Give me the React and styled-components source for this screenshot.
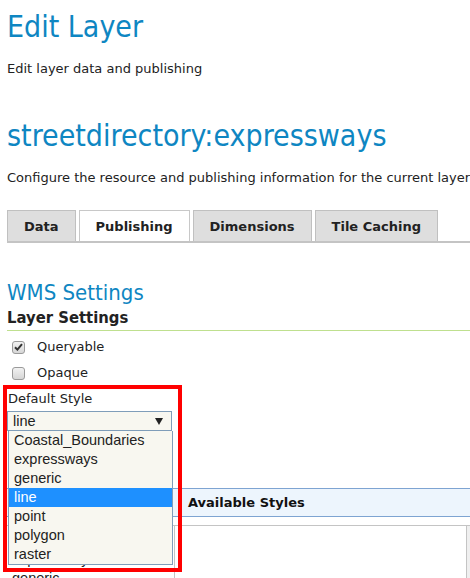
import React from 'react';
import styled, { createGlobalStyle } from 'styled-components';

const Global = createGlobalStyle`
  html, body {
    margin: 0;
    padding: 0;
    background: #fff;
    overflow: hidden;
  }
  body {
    font-family: "DejaVu Sans", Verdana, sans-serif;
    font-size: 13px;
    color: #222;
  }
  * { box-sizing: border-box; }
`;

const Page = styled.div`
  position: relative;
  width: 470px;
  height: 578px;
  padding-left: 7px;
  overflow: hidden;
  white-space: nowrap;
`;

const Title = styled.h1`
  margin: ${p => p.$top}px 0 0;
  font-family: "DejaVu Sans Condensed", "DejaVu Sans", sans-serif;
  font-stretch: condensed;
  font-weight: normal;
  font-size: 30px;
  line-height: 36px;
  color: #0e86c2;
`;

const Lead = styled.p`
  margin: 16px 0 0;
  font-size: 13px;
  line-height: 16px;
  color: #222;
`;

const TabBar = styled.div`
  display: flex;
  gap: 3px;
  margin-top: 24px;
  border-bottom: 2px solid #c4c4c4;
`;

const Tab = styled.div`
  height: 31px;
  padding: 1px 16px 0;
  border: 1px solid ${p => (p.$active ? '#c8c8c8' : '#c0c0c0')};
  border-bottom: none;
  background: ${p => (p.$active ? '#fff' : '#dedede')};
  font-weight: bold;
  font-size: 13px;
  line-height: 29px;
  color: #222;
`;

const SectionTitle = styled.h2`
  margin: 37px 0 0;
  font-family: "DejaVu Sans Condensed", "DejaVu Sans", sans-serif;
  font-stretch: condensed;
  font-weight: normal;
  font-size: 22px;
  line-height: 26px;
  color: #0e86c2;
`;

const SubTitle = styled.h3`
  margin: 2px 0 0;
  padding-bottom: 2px;
  font-family: "DejaVu Sans Condensed", "DejaVu Sans", sans-serif;
  font-stretch: condensed;
  font-weight: bold;
  font-size: 16.5px;
  line-height: 20px;
  color: #222;
  border-bottom: 1px solid #bfe08f;
`;

const CheckRow = styled.label`
  display: flex;
  align-items: center;
  gap: 12px;
  height: 26px;
  padding-left: 5px;
  margin-top: ${p => (p.$first ? 3 : 0)}px;
  line-height: 26px;
`;

const Box = styled.span`
  display: flex;
  align-items: center;
  justify-content: center;
  width: 13px;
  height: 13px;
  border: 1px solid #9a9a9a;
  border-radius: 3px;
  background: linear-gradient(#f2f2f2, #d6d6d6);
`;

const FieldLabel = styled.div`
  margin: 5px 0 0 1px;
  line-height: 16px;
`;

const SelectWrap = styled.div`
  position: relative;
  margin-top: 4px;
  width: 165px;
  z-index: 2;
`;

const Select = styled.div`
  display: flex;
  align-items: center;
  justify-content: space-between;
  height: 20px;
  padding: 0 8px 0 5px;
  border: 1px solid #7f9db9;
  background: #f8f7f0;
  font-family: "Liberation Sans", Arial, sans-serif;
  font-size: 14.5px;
  color: #222;
`;

const Arrow = styled.span`
  width: 0;
  height: 0;
  border-left: 4px solid transparent;
  border-right: 4px solid transparent;
  border-top: 7px solid #222;
`;

const Menu = styled.ul`
  position: absolute;
  top: 20px;
  left: 1px;
  width: 165px;
  margin: 0;
  padding: 0;
  list-style: none;
  border: 1px solid #7f9db9;
  border-top: none;
  background: #f8f7f0;
`;

const Option = styled.li`
  height: 19px;
  padding-left: 5px;
  font-family: "Liberation Sans", Arial, sans-serif;
  font-size: 14.5px;
  line-height: 19px;
  color: ${p => (p.$selected ? '#fff' : '#222')};
  background: ${p => (p.$selected ? '#1e90ff' : 'transparent')};
`;

const StylesHeader = styled.div`
  display: flex;
  margin-top: 57px;
  height: 29px;
  border-top: 1px solid #7ea4d2;
  border-bottom: 1px solid #7ea4d2;
  background: #edf5fd;
`;

const HeadCell = styled.div`
  padding-left: ${p => p.$pad || 0}px;
  width: ${p => (p.$w ? `${p.$w}px` : 'auto')};
  flex: ${p => (p.$w ? 'none' : '1')};
  font-weight: bold;
  font-size: 13px;
  line-height: 27px;
  color: #111;
`;

const ListArea = styled.div`
  display: flex;
  margin-top: 8px;
  height: 60px;
  border-top: 1px solid #c4c4c4;
`;

const ListBox = styled.ul`
  width: 168px;
  margin: 0;
  padding: 5px 0 0 5px;
  list-style: none;
  border-right: 1px solid #c4c4c4;
`;

const ListItem = styled.li`
  height: 19px;
  font-family: "Liberation Sans", Arial, sans-serif;
  font-size: 14.5px;
  line-height: 19px;
  color: #222;
`;

const Blank = styled.div`
  flex: 1;
  border-right: 1px solid #c4c4c4;
`;

const Track = styled.div`
  width: 3px;
  background: #efefef;
`;

const Callout = styled.div`
  position: absolute;
  left: 3px;
  top: 385px;
  width: 179px;
  height: 187px;
  border: 4px solid #ff0000;
  pointer-events: none;
  z-index: 3;
`;

const styles = ['Coastal_Boundaries', 'expressways', 'generic', 'line', 'point', 'polygon', 'raster'];

function Check() {
  return (
    <svg width="9" height="8" viewBox="0 0 9 8">
      <path d="M1 4.2 L3.4 6.6 L8 1.2" fill="none" stroke="#333" strokeWidth="2" />
    </svg>
  );
}

export default function App() {
  return (
    <>
      <Global />
      <Page>
        <Title $top={9}>Edit Layer</Title>
        <Lead>Edit layer data and publishing</Lead>
        <Title $top={41}>streetdirectory:expressways</Title>
        <Lead>Configure the resource and publishing information for the current layer</Lead>

        <TabBar>
          <Tab>Data</Tab>
          <Tab $active>Publishing</Tab>
          <Tab>Dimensions</Tab>
          <Tab>Tile Caching</Tab>
        </TabBar>

        <SectionTitle>WMS Settings</SectionTitle>
        <SubTitle>Layer Settings</SubTitle>

        <CheckRow $first>
          <Box><Check /></Box>
          Queryable
        </CheckRow>
        <CheckRow>
          <Box />
          Opaque
        </CheckRow>

        <FieldLabel>Default Style</FieldLabel>
        <SelectWrap>
          <Select>
            line
            <Arrow />
          </Select>
          <Menu>
            {styles.map(s => (
              <Option key={s} $selected={s === 'line'}>{s}</Option>
            ))}
          </Menu>
        </SelectWrap>

        <StylesHeader>
          <HeadCell $w={168} />
          <HeadCell $pad={13}>Available Styles</HeadCell>
        </StylesHeader>
        <ListArea>
          <ListBox>
            <ListItem>Coastal_Boundaries</ListItem>
            <ListItem>expressways</ListItem>
            <ListItem>generic</ListItem>
          </ListBox>
          <Blank />
          <Track />
        </ListArea>

        <Callout />
      </Page>
    </>
  );
}
